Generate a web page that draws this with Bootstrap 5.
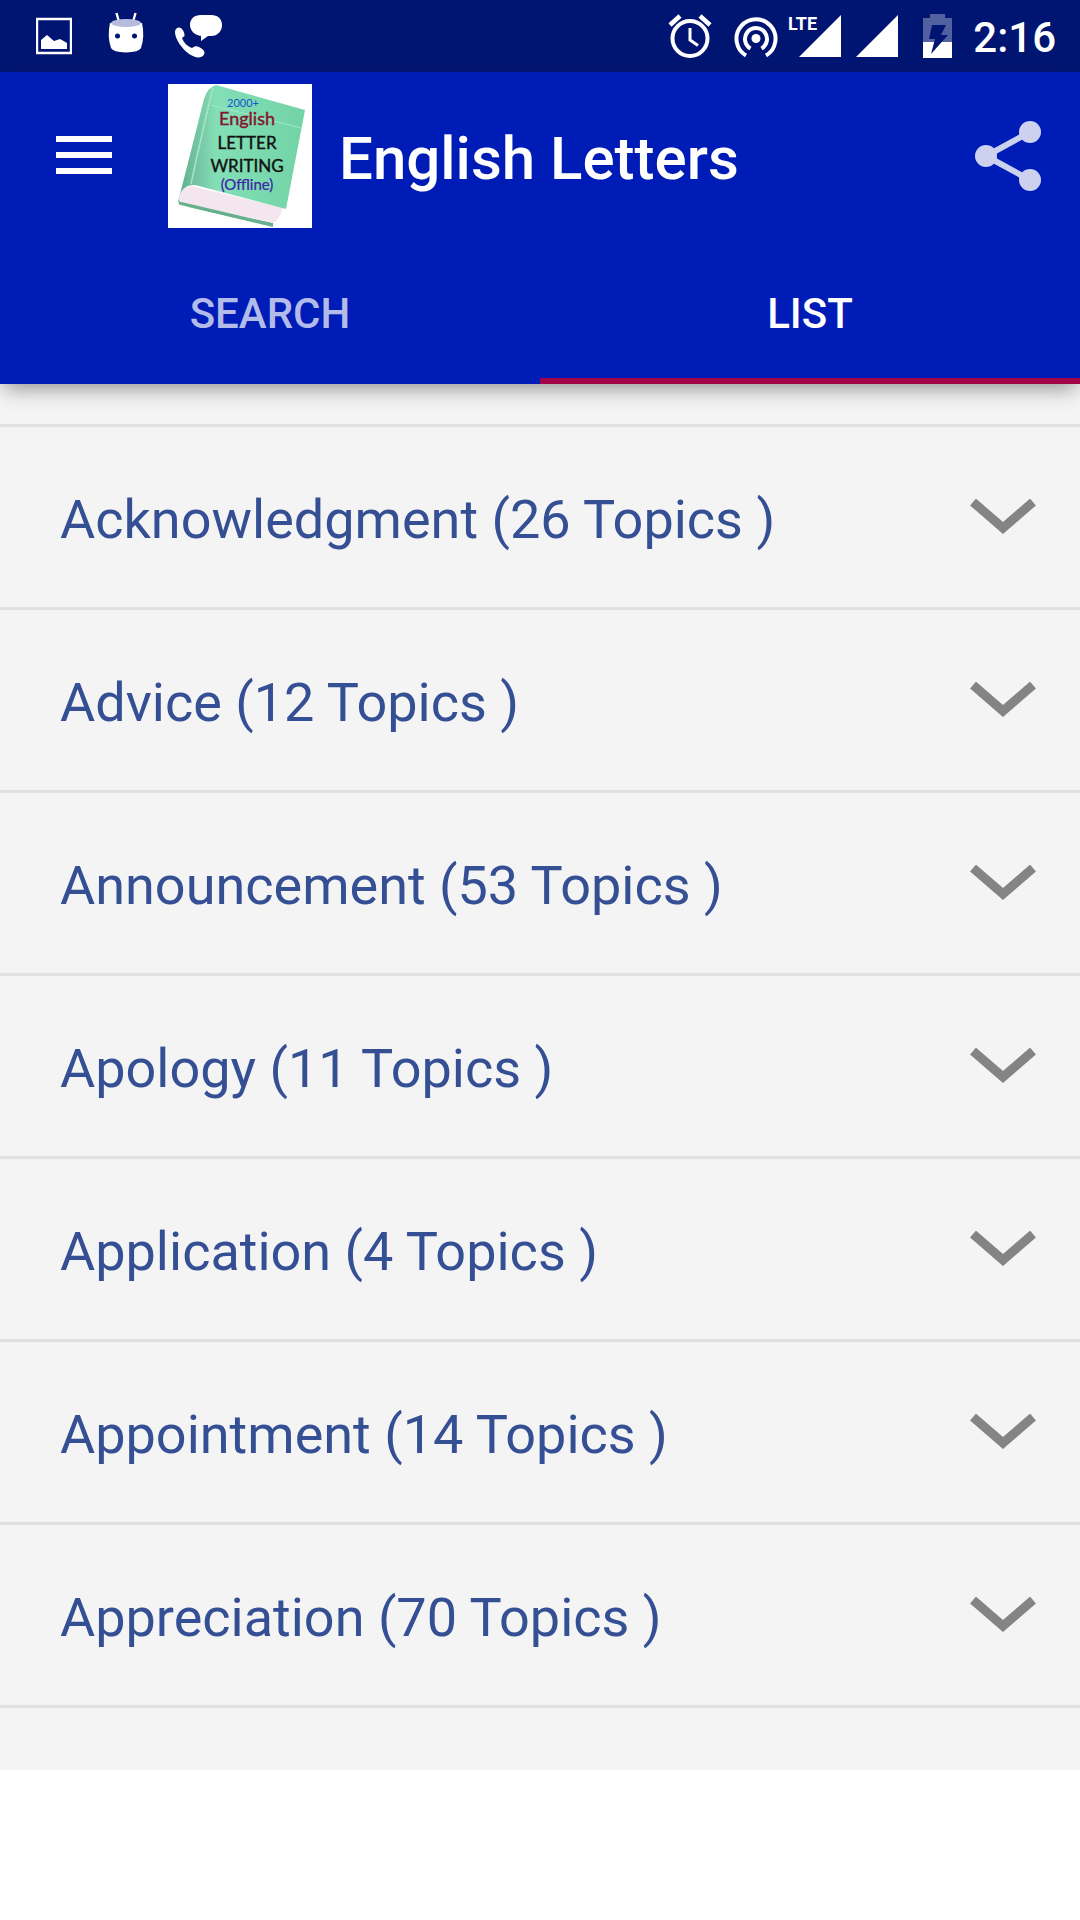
<!DOCTYPE html>
<html lang="en">
<head>
<meta charset="utf-8">
<meta name="viewport" content="width=device-width, initial-scale=1">
<title>English Letters</title>
<link href="https://cdn.jsdelivr.net/npm/bootstrap@5.3.0/dist/css/bootstrap.min.css" rel="stylesheet">
<style>
  body { font-family: Roboto, "Liberation Sans", sans-serif; background: #fff; }
  svg { display: block; flex: none; }
  .status-bar { height: 72px; background: #001572; color: #fff; padding: 0 24px 0 36px; }
  .status-time { font-size: 42px; line-height: 48px; font-weight: 500; margin-left: 20px; padding-top: 3px; }
  .app-header { background: #001cb6; z-index: 1; box-shadow: 0 8px 20px -4px rgba(0,0,0,.42); }
  .app-toolbar { height: 168px; padding: 0 36px 0 56px; }
  .app-toolbar .btn { border-radius: 0; }
  .app-title { font-size: 60px; line-height: 72px; font-weight: 500; margin: 6px 0 0 27px; }
  .app-cover { margin-left: 56px; }
  .app-tabs .nav-link { height: 144px; flex: 1 1 0; border-radius: 0; border: 0 solid transparent; border-bottom-width: 6px; padding: 9px 0 0; font-size: 42px; line-height: 48px; font-weight: 500; color: #b3bbe9; }
  .app-tabs .nav-link.active { color: #fff; background: none; border-color: #a00346; }
  .topic-panel { background: #f4f4f4; padding: 40px 0 62px; }
  .topic-panel .list-group { border-top: 3px solid #e0e0e0; }
  .topic-panel .list-group-item { height: 183px; padding: 6px 44px 0 60px; border-color: #e0e0e0; border-width: 0 0 3px; background: #f4f4f4; color: #354f94; font-size: 54px; line-height: 64px; }
  .topic-panel .list-group-flush > .list-group-item:last-child { border-bottom-width: 3px; }
  .topic-panel .list-group-item svg { margin-top: -6px; }
</style>
</head>
<body>
<div class="status-bar d-flex align-items-center justify-content-between">
  <div class="d-flex align-items-center">
    <svg width="36" height="48" viewBox="0 0 36 48" aria-label="Screenshot saved"><path d="M1 7h34v34H1z" fill="none" stroke="#fff" stroke-width="2.4"/><path d="M5 37V28l6-5 7 6 6-2 7 4v6z" fill="#fff"/></svg>
    <svg class="ms-4" width="60" height="48" viewBox="-13 0 60 48" aria-label="Debugging"><path d="M7.500 1l2.500 9M26.500 1L24 10" stroke="#fff" stroke-width="2.400"/><path d="M1 11Q-2 24 2 36q2 4 15 4.500Q30 40 32 36q4-12 1-25z" fill="#fff"/><ellipse cx="17" cy="11" rx="15" ry="4" fill="#b6bddc"/><circle cx="8.500" cy="24" r="2.500" fill="#001572"/><circle cx="25.500" cy="24" r="2.500" fill="#001572"/></svg>
    <svg class="ms-4" width="60" height="48" viewBox="6 0 60 48" overflow="visible" aria-label="Call"><path d="M27 3h10c7 0 11 4 11 10s-4 11-11 11h-3l-7 5v-5c-6-1-11-5-11-11S20 3 27 3z" fill="#fff"/><path d="M5 15.500c3 0 6 5 5.500 8.500L8 26c2 5 5 8 10 10 2-1.500 4-2 5.500-1.500 4 1.500 7 4 7 6 0 3-3 5-7 5C13 44 1 29 1 20c0-3 2-4.500 4-4.500z" fill="#fff"/></svg>
  </div>
  <div class="d-flex align-items-center">
    <svg width="44" height="48" viewBox="3 0 44 48" overflow="visible" aria-label="Alarm"><circle cx="21" cy="26.500" r="17.500" fill="none" stroke="#fff" stroke-width="4"/><path d="M21 16v12l8 5.500" fill="none" stroke="#fff" stroke-width="3"/><path d="M1 13l10-9M31 4l10 9" stroke="#fff" stroke-width="4.500"/></svg>
    <svg class="ms-3" width="48" height="48" viewBox="-2 0 48 48" aria-label="Hotspot"><circle cx="22" cy="26.500" r="4.500" fill="#fff"/><path d="M16.500 36.500a11 11 0 1 1 11 0M12 43.500a19.500 19.500 0 1 1 20 0" fill="none" stroke="#fff" stroke-width="4"/></svg>
    <svg class="ms-2" width="56" height="48" viewBox="1 0 56 48" aria-label="LTE signal"><path d="M54 3v42H12z" fill="#fff"/><text x="1" y="18" font-family="'Liberation Sans Narrow', Roboto, sans-serif" font-size="18" font-weight="700" fill="#fff">LTE</text></svg>
    <svg class="ms-2" width="48" height="48" viewBox="-3 0 48 48" aria-label="Signal"><path d="M43 3v42H1z" fill="#fff"/></svg>
    <svg class="ms-4" width="29" height="48" viewBox="1 0 29 48" overflow="visible" aria-label="Battery charging"><path d="M0 6h7V2h15v4h7v24H0z" fill="#5260a0"/><path d="M0 30h29v16H0z" fill="#fff"/><path d="M9 13h14l-5 10h7L8 42l4-15H6z" fill="#001572"/></svg>
    <span class="status-time">2:16</span>
  </div>
</div>

<header class="app-header position-relative">
  <div class="app-toolbar d-flex align-items-center text-white">
    <button type="button" class="btn p-0 border-0" aria-label="Menu"><svg width="56" height="40" viewBox="0 0 56 40"><path d="M0 0h56v6H0zM0 16h56v6H0zM0 32h56v6H0z" fill="#fff"/></svg></button>
    <svg class="app-cover" width="144" height="144" viewBox="0 0 144 144" aria-label="2000+ English letter writing, offline">
      <defs><linearGradient id="coverShade" x1="0" y1="0" x2="1" y2="0"><stop offset="0" stop-color="#5fae8c"/><stop offset=".18" stop-color="#78c9a6"/><stop offset=".3" stop-color="#83dfb6"/><stop offset="1" stop-color="#72d3a6"/></linearGradient></defs>
      <path d="M0 0h144v144H0z" fill="#fff"/>
      <path d="M10 118l2 3 93 18v4L12 121z" fill="#67b08d"/>
      <path d="M11 113q0-9 12-11l92 22q-3 11-10 15L14 119z" fill="#f4e6ee"/>
      <path d="M11 119l94 22" stroke="#67b08d" stroke-width="3" fill="none"/>
      <path d="M10 118L23 67 36 15Q40 3 48 1l89 25-19 99-91-24q-9-1-14 7-3 7-1 11z" fill="url(#coverShade)"/>
      <path d="M45 4Q36 40 23 100" stroke="#a5e5c9" stroke-width="1.500" fill="none"/>
      <path d="M43 21l90 23" stroke="#9bebc8" fill="none"/>
      <g font-family="Lato, 'Open Sans', sans-serif" text-anchor="middle">
        <text x="75" y="23" font-size="11" fill="#1456d0">2000+</text>
        <text x="79" y="41" font-size="18" fill="#84132e" stroke="#84132e" stroke-width=".4">English</text>
        <text x="79" y="65" font-size="17" fill="#111" stroke="#111" stroke-width=".4">LETTER</text>
        <text x="79" y="88" font-size="17" fill="#111" stroke="#111" stroke-width=".4">WRITING</text>
        <text x="79" y="106" font-size="15" fill="#3d21a8" stroke="#3d21a8" stroke-width=".2">(Offline)</text>
      </g>
    </svg>
    <h1 class="app-title">English Letters</h1>
    <button type="button" class="btn p-0 border-0 ms-auto" aria-label="Share"><svg width="72" height="72" viewBox="0 0 72 72"><g fill="#cdd1f0"><path d="M58 12L14 36l44 24" fill="none" stroke="#cdd1f0" stroke-width="6"/><circle cx="14" cy="36" r="11"/><circle cx="58" cy="12" r="11"/><circle cx="58" cy="60" r="11"/></g></svg></button>
  </div>
  <nav class="app-tabs nav">
    <a class="nav-link d-flex align-items-center justify-content-center" href="#search">SEARCH</a>
    <a class="nav-link active d-flex align-items-center justify-content-center" href="#list" aria-current="page">LIST</a>
  </nav>
</header>

<main class="topic-panel" id="list">
  <div class="list-group list-group-flush">
    <button type="button" class="list-group-item list-group-item-action d-flex align-items-center justify-content-between">Acknowledgment (26 Topics )<svg width="66" height="36" viewBox="0 0 66 36"><path d="M3 3l30 26L63 3" fill="none" stroke="#848484" stroke-width="9"/></svg></button>
    <button type="button" class="list-group-item list-group-item-action d-flex align-items-center justify-content-between">Advice (12 Topics )<svg width="66" height="36" viewBox="0 0 66 36"><path d="M3 3l30 26L63 3" fill="none" stroke="#848484" stroke-width="9"/></svg></button>
    <button type="button" class="list-group-item list-group-item-action d-flex align-items-center justify-content-between">Announcement (53 Topics )<svg width="66" height="36" viewBox="0 0 66 36"><path d="M3 3l30 26L63 3" fill="none" stroke="#848484" stroke-width="9"/></svg></button>
    <button type="button" class="list-group-item list-group-item-action d-flex align-items-center justify-content-between">Apology (11 Topics )<svg width="66" height="36" viewBox="0 0 66 36"><path d="M3 3l30 26L63 3" fill="none" stroke="#848484" stroke-width="9"/></svg></button>
    <button type="button" class="list-group-item list-group-item-action d-flex align-items-center justify-content-between">Application (4 Topics )<svg width="66" height="36" viewBox="0 0 66 36"><path d="M3 3l30 26L63 3" fill="none" stroke="#848484" stroke-width="9"/></svg></button>
    <button type="button" class="list-group-item list-group-item-action d-flex align-items-center justify-content-between">Appointment (14 Topics )<svg width="66" height="36" viewBox="0 0 66 36"><path d="M3 3l30 26L63 3" fill="none" stroke="#848484" stroke-width="9"/></svg></button>
    <button type="button" class="list-group-item list-group-item-action d-flex align-items-center justify-content-between">Appreciation (70 Topics )<svg width="66" height="36" viewBox="0 0 66 36"><path d="M3 3l30 26L63 3" fill="none" stroke="#848484" stroke-width="9"/></svg></button>
  </div>
</main>
<script src="https://cdn.jsdelivr.net/npm/bootstrap@5.3.0/dist/js/bootstrap.bundle.min.js"></script>
</body>
</html>
